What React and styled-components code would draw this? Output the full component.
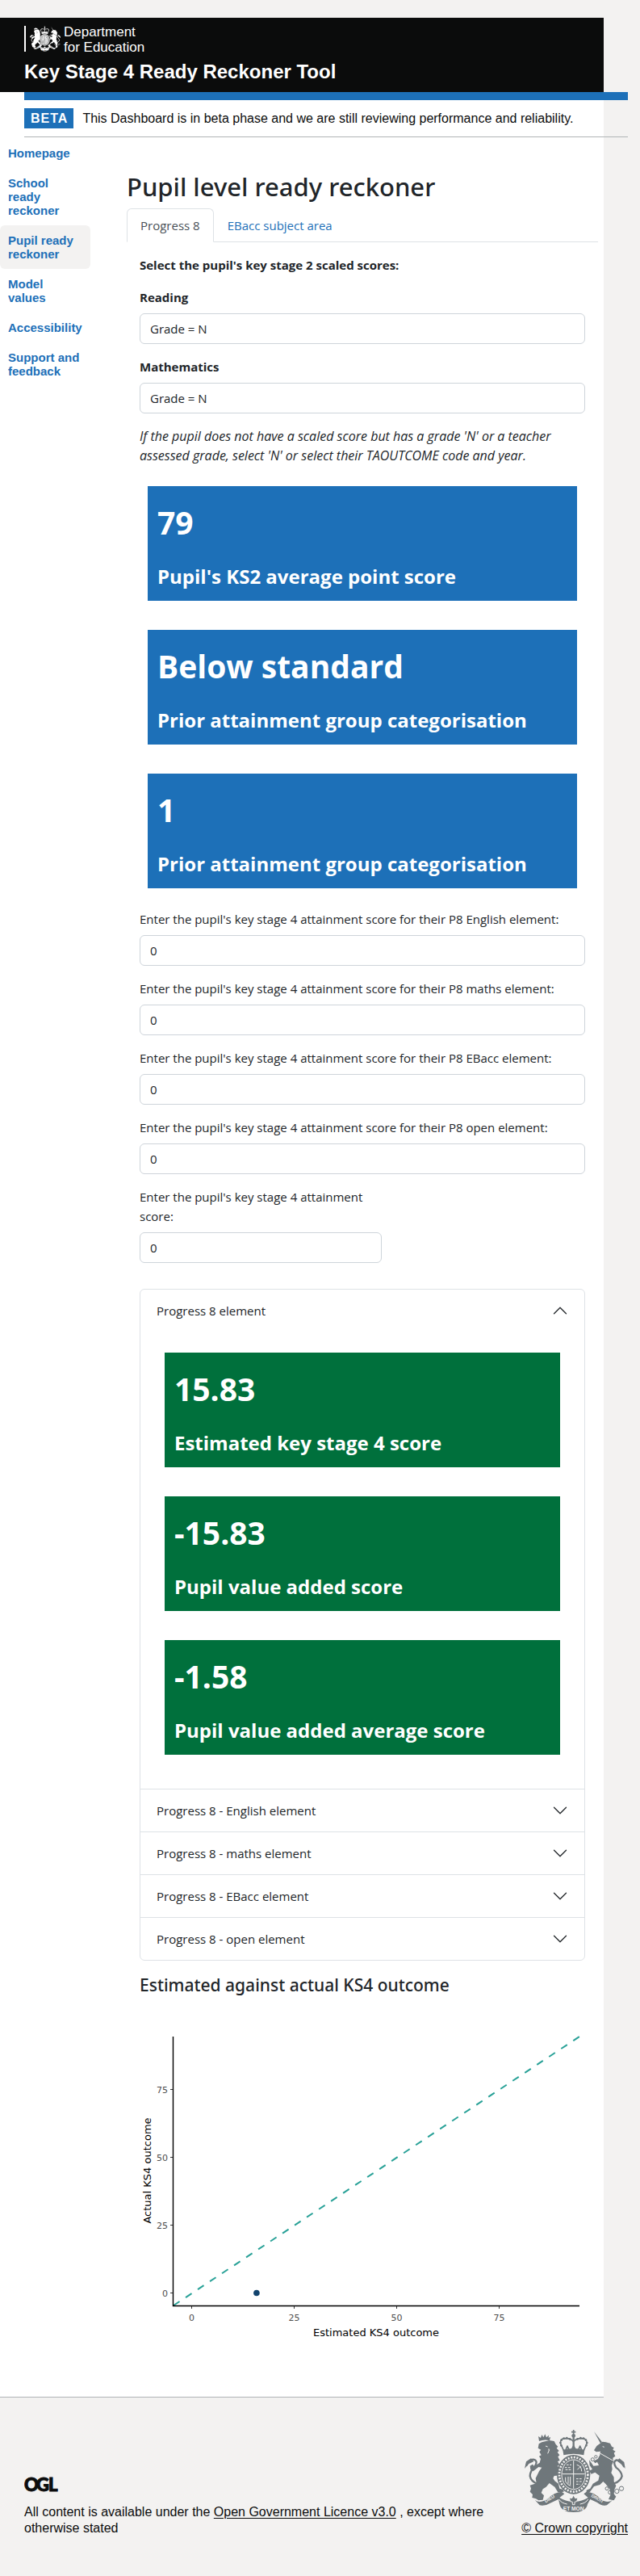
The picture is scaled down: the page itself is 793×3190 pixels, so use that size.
import React, { useState } from "react";
import styled, { createGlobalStyle } from "styled-components";

const colours = {
  page: "#f3f2f1",
  ink: "#0b0c0c",
  text: "#212529",
  blue: "#1d70b8",
  green: "#00703c",
  rule: "#b1b4b6",
  line: "#dee2e6",
  field: "#ced4da",
};

const sans = `"Open Sans", "Noto Sans", sans-serif`;
const display = `"Noto Sans", "Open Sans", sans-serif`;
const arial = `"Liberation Sans", Arial, sans-serif`;

const GlobalStyle = createGlobalStyle`
  *, *::before, *::after { box-sizing: border-box; }
  body {
    margin: 0;
    background: ${colours.page};
    color: ${colours.text};
    font: 15px/24px ${sans};
  }
  h1, h2, p { margin: 0; }
`;

const Page = styled.div`
  padding: 22px 45px 50px 0;
`;

const Sheet = styled.div`
  background: #fff;
  border-bottom: 1px solid ${colours.rule};
  padding-bottom: 31px;
`;

/* The GOV.UK width container is shifted by its left margin. */
const Shifted = styled.div`
  margin: 0 -30px 0 30px;
`;

const Header = styled.header`
  background: ${colours.ink};
  color: #fff;
  height: 92px;
  padding: 10px 30px 0;
  font-family: ${arial};
`;

const Department = styled.a`
  display: flex;
  gap: 4px;
  height: 32px;
  padding-left: 5px;
  border-left: 2px solid #fff;
  color: #fff;
  font-size: 17px;
  line-height: 19px;
  text-decoration: none;
  align-items: center;

  span { padding-top: 2px; }
`;

const ServiceName = styled.div`
  margin-top: 10px;
  font-size: 24px;
  line-height: 30px;
  font-weight: 700;
`;

const PhaseBanner = styled(Shifted)`
  display: flex;
  align-items: center;
  gap: 11px;
  border-top: 10px solid ${colours.blue};
  border-bottom: 1px solid ${colours.rule};
  padding: 10px 0;
  font: 16px/20px ${arial};
  color: ${colours.ink};
`;

const PhaseTag = styled.strong`
  background: ${colours.blue};
  color: #fff;
  padding: 3px 7px 2px 8px;
  letter-spacing: 1px;
`;

const Columns = styled.div`
  display: grid;
  grid-template-columns: 112px minmax(0, 1fr);
  gap: 45px;
  padding-right: 7px;
`;

const SideNav = styled.nav`
  display: flex;
  flex-direction: column;
  padding-top: 1px;
`;

const SideLink = styled.a`
  padding: 10px;
  border-radius: 6px;
  background: ${(p) => (p.$active ? colours.page : "transparent")};
  color: ${colours.blue};
  font: 700 15px/17px ${arial};
  text-decoration: none;
`;

const Main = styled.main`
  padding-top: 40px;
`;

const Title = styled.h1`
  font-family: ${display};
  font-size: 31px;
  line-height: 42px;
  font-weight: 500;
  margin-bottom: 6px;
`;

const Tabs = styled.div`
  display: flex;
  border-bottom: 1px solid ${colours.line};
`;

const Tab = styled.button`
  margin-bottom: -1px;
  padding: 8px 16px;
  border: 1px solid ${(p) => (p.$active ? colours.line : "transparent")};
  border-bottom-color: ${(p) => (p.$active ? "#fff" : "transparent")};
  border-radius: 6px 6px 0 0;
  background: ${(p) => (p.$active ? "#fff" : "transparent")};
  color: ${(p) => (p.$active ? "#495057" : colours.blue)};
  font: inherit;
`;

const Panel = styled.div`
  display: flex;
  flex-direction: column;
  gap: 16px;
  padding: 16px;
`;

const Lead = styled.p`
  font-weight: 700;
`;

const Hint = styled.p`
  font-size: 16px;
  font-style: italic;
`;

const Field = styled.div`
  display: flex;
  flex-direction: column;
  gap: 8px;
  max-width: ${(p) => (p.$narrow ? "300px" : "none")};
`;

const Label = styled.label`
  font-weight: ${(p) => (p.$strong ? 700 : 400)};
`;

const control = `
  width: 100%;
  height: 38px;
  padding: 6px 12px;
  border: 1px solid ${colours.field};
  border-radius: 6px;
  background: #fff;
  color: ${colours.text};
  font: inherit;
  appearance: none;
`;

const Select = styled.select`${control}`;
const Input = styled.input`${control}`;

const BoxStack = styled.div`
  display: flex;
  flex-direction: column;
  gap: 36px;
  padding: 10px;
`;

const ValueBox = styled.div`
  height: 142px;
  padding: 15px 12px;
  background: ${(p) => p.$colour};
  color: #fff;
  font-weight: 700;
`;

const BoxValue = styled.div`
  font-size: 39px;
  line-height: 60px;
`;

const BoxLabel = styled.div`
  margin-top: 19px;
  font-size: 24px;
  line-height: 36px;
`;

const Accordion = styled.div`
  margin-top: 16px;
  border: 1px solid ${colours.line};
  border-radius: 6px;
`;

const AccordionItem = styled.section`
  & + & {
    border-top: 1px solid ${colours.line};
  }
`;

const AccordionButton = styled.button`
  display: flex;
  align-items: center;
  justify-content: space-between;
  width: 100%;
  height: 52px;
  padding: 0 20px;
  border: 0;
  background: transparent;
  color: ${colours.text};
  font: inherit;
`;

const Chevron = styled.svg`
  width: 20px;
  height: 20px;
  transform: ${(p) => (p.$open ? "rotate(180deg)" : "none")};
`;

const AccordionBody = styled.div`
  padding: 16px 20px 32px;
`;

const ChartHeading = styled.h2`
  font-family: ${display};
  margin-bottom: 8px;
  font-size: 21px;
  line-height: 29px;
  font-weight: 500;
`;

const Chart = styled.svg`
  display: block;
  width: 100%;
  font-family: "DejaVu Sans", Verdana, sans-serif;
`;

const Footer = styled.footer`
  margin: 40px -30px 0 30px;
  display: flex;
  align-items: flex-end;
  justify-content: space-between;
  gap: 30px;
  color: ${colours.ink};
  font: 16px/20px ${arial};
`;

const Licence = styled.div`
  max-width: 586px;
`;

const OglLogo = styled.svg`
  display: block;
  width: 48px;
  height: 25px;
  margin-bottom: 11px;
`;

const InkLink = styled.a`
  color: ${colours.ink};
  text-underline-offset: 2px;
`;

const Copyright = styled(InkLink)`
  display: flex;
  flex-direction: column;
  align-items: center;
  gap: 10px;
  white-space: nowrap;
`;

const CrestSvg = styled.svg`
  display: block;
  flex: none;
`;

const beads = [
  [196, 82], [193, 72], [197, 62], [206, 56], [217, 54], [228, 58],
  [257, 58], [268, 54], [279, 56], [288, 62], [292, 72], [289, 82],
];

/* Royal coat of arms: lion, unicorn, crown, garter and motto scroll. */
function Crest({ width, height, colour, back }) {
  return (
    <CrestSvg width={width} height={height} viewBox="60 24 375 306" aria-hidden="true">
      <g fill="none" stroke={colour} strokeWidth="5" strokeLinejoin="round">
        {/* crown */}
        <path d="M205 100L194 76Q190 57 211 56Q234 56 242 68Q250 56 273 56Q294 57 291 76L280 100" />
        <path d="M242 50V96" strokeWidth="7" />
        <path d="M242 24v18M234 32h16" />
        <path d="M213 98l6-14 6 14M260 98l6-14 6 14M234 98l8-14 8 14" />
        {/* lion's tail */}
        <path d="M110 225Q84 218 80 196Q80 178 98 160Q112 138 92 134Q72 136 66 158" strokeWidth="7" />
        {/* unicorn's tail and chain */}
        <path d="M385 225Q416 218 422 196Q420 178 400 164Q386 142 402 136Q420 138 430 162" strokeWidth="7" />
        <g strokeWidth="3">
          <circle cx="366" cy="242" r="6" />
          <circle cx="378" cy="256" r="7" />
          <circle cx="403" cy="252" r="8" />
          <circle cx="420" cy="242" r="8" />
          <circle cx="313" cy="134" r="6" />
          <circle cx="325" cy="124" r="5" />
        </g>
      </g>
      <g fill={colour}>
        <circle cx="242" cy="46" r="7" />
        {beads.map(([x, y]) => (
          <circle key={`${x}-${y}`} cx={x} cy={y} r="4" />
        ))}
        <path d="M202 98Q242 88 283 98L280 118Q242 108 205 118Z" />
        {/* lion's crown */}
        <path d="M114 66L111 48L120 54L124 42L130 52L136 40L141 52L150 44L149 54L156 50L153 64Q134 58 114 66Z" />
        {/* lion */}
        <path d="M113 76L124 70L152 63L170 66L176 78L184 86L179 92L188 102L182 107L190 118L184 124L191 138L183 141L190 154L182 158L200 178L206 200L196 203L182 180L180 194L170 195L166 204L172 214L186 224L190 242L204 246L206 254L184 256L172 236L152 222L140 236L128 244L122 258L132 268L128 284L112 286L102 280L88 276L90 264L80 254L84 242L80 230L94 226L104 222L101 204L114 178L124 164L112 162L92 178L82 172L80 158L90 152L96 160L116 146L120 132L114 122L122 118L115 106L121 98L110 92Z" />
        <path d="M60 168L66 142L84 130L94 142L76 150Z" />
        {/* unicorn */}
        <path d="M318 30L348 70L342 74Z" />
        <path d="M341 74L350 68L362 70L378 74L384 86L392 90L388 98L398 104L392 110L397 122L388 128L390 142L384 156L386 170L382 184L392 200L392 216L400 232L394 246L392 262L400 272L392 286L372 282L380 264L376 244L362 226L352 216L340 228L318 234L302 256L290 260L290 248L304 242L314 224L334 212L338 194L322 182L308 188L300 176L312 170L302 156L300 136L308 146L316 158L336 156L330 144L322 148L316 140L332 132L340 118L342 104L326 106L318 100L328 84Z" />
        <path d="M434 168L430 144L412 130L404 140L420 152Z" />
        {/* garter */}
        <ellipse cx="242" cy="190" rx="62" ry="73" />
        {/* scroll */}
        <path d="M98 284Q116 300 148 278Q170 256 198 254L208 262L190 276Q216 292 242 290Q270 292 296 276L280 262L290 254Q318 256 340 278Q366 300 388 284L366 304Q346 308 330 294L304 282L294 300Q290 330 242 330Q196 330 190 300L186 282L160 294Q138 308 116 304Z" />
      </g>
      <ellipse cx="242" cy="190" rx="44" ry="55" fill="none" stroke={back} strokeWidth="3" />
      <ellipse cx="242" cy="190" rx="53" ry="64" fill="none" stroke={back} strokeWidth="8" strokeDasharray="6 5" />
      <g fill="none" stroke={back} strokeWidth="3">
        <path d="M242 138V242M200 188H284" />
        <path d="M210 164h24M212 172h22M216 154h18" strokeDasharray="8 4" />
        <path d="M252 206h24M252 216h22M252 226h14" strokeDasharray="8 4" />
        <path d="M254 154q18 4 18 24M256 172l14-14M212 200v16q8 14 20 16M222 198v26M230 198v30" />
        <path d="M150 94v6M138 84l8 3M350 86l6 2M152 98l-6 14M342 112l46 26" />
        <path d="M188 282q8 14 30 18M296 282q-8 14-30 18" />
      </g>
      <path d="M242 266l6 12 10-2-4 14-8 2v10h-8v-10l-8-2-4-14 10 2Z" fill={colour} stroke={back} strokeWidth="3" />
      <g fill={back} fontFamily={arial} fontWeight="700" fontSize="20" textAnchor="middle">
        <text x="242" y="325">ET MON</text>
        <text transform="translate(156 285) rotate(-32)" x="0" y="0" fontSize="17">DIEU</text>
        <text transform="translate(328 284) rotate(30)" x="0" y="0" fontSize="16">DROIT</text>
      </g>
    </CrestSvg>
  );
}

function Boxes({ items, colour }) {
  return (
    <BoxStack>
      {items.map(([value, label], i) => (
        <ValueBox key={i} $colour={colour}>
          <BoxValue>{value}</BoxValue>
          <BoxLabel>{label}</BoxLabel>
        </ValueBox>
      ))}
    </BoxStack>
  );
}

const navItems = [
  "Homepage",
  "School ready reckoner",
  "Pupil ready reckoner",
  "Model values",
  "Accessibility",
  "Support and feedback",
];

const ks2Boxes = [
  ["79", "Pupil's KS2 average point score"],
  ["Below standard", "Prior attainment group categorisation"],
  ["1", "Prior attainment group categorisation"],
];

const progressBoxes = [
  ["15.83", "Estimated key stage 4 score"],
  ["-15.83", "Pupil value added score"],
  ["-1.58", "Pupil value added average score"],
];

const elements = ["English", "maths", "EBacc", "open"];

const accordionTitles = [
  "Progress 8 element",
  ...elements.map((name) => `Progress 8 - ${name} element`),
];

/* Chart scales: score to drawing units. */
const px = (v) => 64.5 + v * 5.08;
const py = (v) => 358.5 - v * 3.36;

function OutcomeChart() {
  return (
    <Chart viewBox="0 0 552 440" role="img" aria-label="Estimated against actual KS4 outcome">
      <line x1="42" y1="374" x2="545" y2="41" stroke="#28a197" strokeWidth="2" strokeDasharray="9 9" />
      <path d="M41.5 41V374.5H545" fill="none" stroke="#000" strokeWidth="1.4" />
      {[0, 25, 50, 75].map((v) => (
        <g key={v} fill="#4d4d4d" fontSize="11">
          <path d={`M38 ${py(v)}h3M${px(v)} 375v3`} stroke="#333" />
          <text x="35" y={py(v) + 4} textAnchor="end">{v}</text>
          <text x={px(v)} y="393" textAnchor="middle">{v}</text>
        </g>
      ))}
      <circle cx={px(15.83)} cy={py(0)} r="3.8" fill="#12436d" />
      <g fontSize="13" fill="#000" textAnchor="middle">
        <text x="293" y="412">Estimated KS4 outcome</text>
        <text transform="translate(14 207) rotate(-90)">Actual KS4 outcome</text>
      </g>
    </Chart>
  );
}

export default function App() {
  const [tab, setTab] = useState(0);
  const [open, setOpen] = useState(0);

  return (
    <Page>
      <GlobalStyle />
      <Sheet>
        <Header>
          <Department href="#">
            <Crest width="38" height="32" colour="#fff" back={colours.ink} />
            <span>Department<br />for Education</span>
          </Department>
          <ServiceName>Key Stage 4 Ready Reckoner Tool</ServiceName>
        </Header>
        <PhaseBanner>
          <PhaseTag>BETA</PhaseTag>
          <span>This Dashboard is in beta phase and we are still reviewing performance and reliability.</span>
        </PhaseBanner>
        <Columns>
          <SideNav>
            {navItems.map((item) => (
              <SideLink key={item} href="#" $active={item.startsWith("Pupil")}>{item}</SideLink>
            ))}
          </SideNav>
          <Main>
            <Title>Pupil level ready reckoner</Title>
            <Tabs role="tablist">
              {["Progress 8", "EBacc subject area"].map((name, i) => (
                <Tab key={name} role="tab" aria-selected={tab === i} $active={tab === i} onClick={() => setTab(i)}>
                  {name}
                </Tab>
              ))}
            </Tabs>
            <Panel>
              <Lead>Select the pupil's key stage 2 scaled scores:</Lead>
              {["Reading", "Mathematics"].map((name) => (
                <Field key={name}>
                  <Label htmlFor={name} $strong>{name}</Label>
                  <Select id={name}><option>Grade = N</option></Select>
                </Field>
              ))}
              <Hint>
                If the pupil does not have a scaled score but has a grade 'N' or a teacher assessed grade, select 'N' or select their TAOUTCOME code and year.
              </Hint>
              <Boxes items={ks2Boxes} colour={colours.blue} />
              {elements.map((name) => (
                <Field key={name}>
                  <Label htmlFor={name}>Enter the pupil's key stage 4 attainment score for their P8 {name} element:</Label>
                  <Input id={name} inputMode="decimal" defaultValue="0" />
                </Field>
              ))}
              <Field $narrow>
                <Label htmlFor="total">Enter the pupil's key stage 4 attainment score:</Label>
                <Input id="total" inputMode="decimal" defaultValue="0" />
              </Field>
              <Accordion>
                {accordionTitles.map((title, i) => (
                  <AccordionItem key={title}>
                    <AccordionButton aria-expanded={open === i} onClick={() => setOpen(open === i ? -1 : i)}>
                      {title}
                      <Chevron viewBox="0 0 16 16" $open={open === i} aria-hidden="true">
                        <path d="M2 5l6 6 6-6" fill="none" stroke={colours.text} strokeLinecap="round" strokeLinejoin="round" />
                      </Chevron>
                    </AccordionButton>
                    {open === i && (
                      <AccordionBody>
                        <Boxes items={progressBoxes} colour={colours.green} />
                      </AccordionBody>
                    )}
                  </AccordionItem>
                ))}
              </Accordion>
              <div>
                <ChartHeading>Estimated against actual KS4 outcome</ChartHeading>
                <OutcomeChart />
              </div>
            </Panel>
          </Main>
        </Columns>
      </Sheet>
      <Footer>
        <Licence>
          <OglLogo viewBox="0 0 48 25" role="img" aria-label="Open Government Licence">
            <g fontFamily="Lato, sans-serif" fontWeight="900" fontSize="22" fill={colours.ink} stroke={colours.ink}>
              <text x="0" y="20">O</text>
              <text x="15" y="20">G</text>
              <text x="30" y="20">L</text>
            </g>
          </OglLogo>
          All content is available under the <InkLink href="#">Open Government Licence v3.0</InkLink> , except where otherwise stated
        </Licence>
        <Copyright href="#">
          <Crest width="125" height="102" colour="#6f777b" back={colours.page} />
          © Crown copyright
        </Copyright>
      </Footer>
    </Page>
  );
}
